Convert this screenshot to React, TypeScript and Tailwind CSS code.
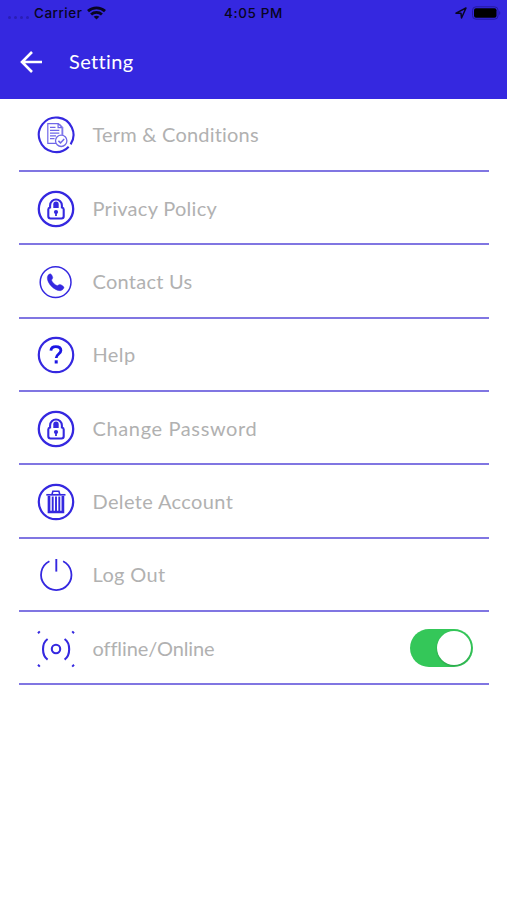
import type { ReactNode } from 'react';

const BLUE = '#3528e0';

function Icon({ children }: { children: ReactNode }) {
  return (
    <svg className="mt-[2px] h-10 w-10 shrink-0" viewBox="0 0 40 40" fill="none" stroke={BLUE} strokeWidth="2">
      {children}
    </svg>
  );
}

function TermsIcon() {
  return (
    <Icon>
      <path d="M32.7 31.7A17.3 17.3 0 1 1 34.6 29.3" strokeWidth="2.1" />
      <g strokeWidth="1.2" opacity="0.7">
        <path d="M20 28.4h-8.2V8.6h10.5l3.8 4v7.2M22.1 8.7v4h4" />
        <path d="M23.4 8.8l3.4 3.6v7.8" strokeWidth="0.9" />
        <path d="M14 12.4h5.5M14 15.3h9.3M14 18.1h9.3M14 20.9h6M14 23.7h4.5" />
        <circle cx="25.2" cy="25.8" r="5.7" fill="#fff" strokeWidth="1.3" />
        <path d="M22.4 25.9l2.1 2 3.7-3.8" strokeWidth="1.5" />
      </g>
    </Icon>
  );
}

function LockIcon() {
  return (
    <Icon>
      <circle cx="20" cy="20" r="17.2" strokeWidth="2.3" />
      <path
        d="M14.1 18.4v-2a5.9 5.9 0 0 1 11.8 0v2c1.2.3 1.8 1 1.8 2v6.9c0 1.4-.8 2.2-2.2 2.2h-11c-1.4 0-2.2-.8-2.2-2.2v-6.9c0-1 .6-1.7 1.8-2z"
        strokeWidth="2.1"
      />
      <path d="M17.3 19v-3.7a2.7 2.7 0 0 1 5.4 0V19z" fill={BLUE} stroke="none" />
      <circle cx="20" cy="23" r="2.1" fill={BLUE} stroke="none" />
      <path d="M20 22.8v4.3" strokeWidth="1.8" />
    </Icon>
  );
}

function PhoneIcon() {
  return (
    <Icon>
      <circle cx="19.6" cy="20.2" r="15.4" strokeWidth="1.5" />
      <path
        d="M11.8 13.7c.7-1.2 1.9-2 2.8-1.8 1 .3 2.1 2.7 2.2 3.9.1.9-1.2 1.4-1.2 2.3.1 1.7 3.8 5.4 5.6 5.5.9.1 1.5-1.3 2.6-1.2 1.2.1 4 1.8 4.2 2.8.2 1.3-1.9 3.3-3.6 3.5-5.5.4-13.3-7.3-13.1-12.8 0-.8.1-1.6.5-2.2z"
        fill={BLUE}
        stroke={BLUE}
        strokeWidth="0.4"
      />
    </Icon>
  );
}

function HelpIcon() {
  return (
    <Icon>
      <circle cx="20" cy="20" r="17.2" strokeWidth="2.2" />
      <path d="M14.9 15.6c.2-2.6 2-4 4.9-4 3.1 0 5.1 1.5 5.1 4 0 3.4-4.7 3.5-4.7 7.4" stroke="#1c16e4" strokeWidth="2.8" />
      <path d="M18.7 25.3h3v3.2h-3z" fill="#1c16e4" stroke="none" />
    </Icon>
  );
}

function TrashIcon() {
  return (
    <Icon>
      <circle cx="20" cy="20" r="17.2" strokeWidth="2.2" />
      <path d="M16 12.4l.9-3.2h6l.9 3.2" strokeWidth="1.6" />
      <path d="M10.3 12.8h19.2" strokeWidth="1.7" />
      <path d="M13 14v16h13.9V14" strokeWidth="2.7" />
      <path d="M16.7 14.5V30M20 14.5V30M23.3 14.5V30" strokeWidth="1.9" />
    </Icon>
  );
}

function PowerIcon() {
  return (
    <Icon>
      <path d="M13.4 6.3a15.2 15.2 0 1 0 13.7 0" strokeWidth="1.8" />
      <path d="M20.3 4v12.6" strokeWidth="1.9" />
    </Icon>
  );
}

function OnlineIcon() {
  return (
    <Icon>
      <circle cx="20" cy="20" r="4.2" strokeWidth="2.1" />
      <path d="M11.6 10c-6.1 4.2-6.1 16.4 0 20.6M28.6 10c6.1 4.2 6.1 16.4 0 20.6" strokeWidth="2.1" />
      <path d="M2 4.2l1.8-1.8M36.2 2.4L38 4.2M2 35.8l1.8 1.8M36.2 37.6l1.8-1.8" strokeWidth="2" />
    </Icon>
  );
}

const items = [
  { label: 'Term & Conditions', icon: <TermsIcon />, spacing: 'tracking-[0.2px]' },
  { label: 'Privacy Policy', icon: <LockIcon />, spacing: 'tracking-[0.28px]' },
  { label: 'Contact Us', icon: <PhoneIcon />, spacing: 'tracking-[0.25px]' },
  { label: 'Help', icon: <HelpIcon />, spacing: 'tracking-[0.4px]' },
  { label: 'Change Password', icon: <LockIcon />, spacing: 'tracking-[0.63px]' },
  { label: 'Delete Account', icon: <TrashIcon />, spacing: 'tracking-[0.36px]' },
  { label: 'Log Out', icon: <PowerIcon />, spacing: 'tracking-[0.35px]' },
  { label: 'offline/Online', icon: <OnlineIcon />, spacing: 'tracking-[-0.1px]', toggle: true },
];

function StatusBar() {
  return (
    <div className="grid h-[26px] grid-cols-3 items-center font-['Inter',sans-serif] text-[13.5px] font-medium text-[#080522]">
      <div className="flex items-center pl-2">
        <div className="mt-2 flex w-[26px] gap-[3px]">
          {[0, 1, 2, 3].map((dot) => (
            <span key={dot} className="h-[3px] w-[3px] rounded-full bg-[#2a1eb5]" />
          ))}
        </div>
        <span className="tracking-[0.5px]">Carrier</span>
        <svg className="ml-[5px] h-[14px] w-[19px]" viewBox="0 0 19 14" fill="none" stroke="#080522" strokeWidth="2.8">
          <path d="M1 5.1c4.8-4.4 12.2-4.4 17 0M4.1 8.4c3-2.8 7.8-2.8 10.8 0" />
          <path d="M9.5 13.5l-2.8-2.8c1.5-1.4 4.1-1.4 5.6 0z" fill="#080522" stroke="none" />
        </svg>
      </div>
      <span className="text-center tracking-[0.6px]">4:05 PM</span>
      <div className="flex items-center justify-end gap-[5px] pr-[6px]">
        <svg className="h-3 w-3" viewBox="0 0 12 12" fill="none" stroke="#080522" strokeWidth="1.5" strokeLinejoin="round">
          <path d="M1 6.2L11 1 6.5 11 6 6.3z" />
        </svg>
        <svg className="h-[14px] w-[29px]" viewBox="0 0 29 14">
          <rect x="0.5" y="0.8" width="25.5" height="12.4" rx="3.5" fill="none" stroke="#2419a0" />
          <rect x="2" y="2.3" width="22.5" height="9.4" rx="2" fill="#000" />
          <path d="M27.3 5v4c1.3-.5 1.3-3.5 0-4z" fill="#2419a0" />
        </svg>
      </div>
    </div>
  );
}

export default function App() {
  return (
    <div className="min-h-[900px] w-[507px] bg-white font-['Lato',sans-serif]">
      <header className="h-[98.7px] bg-[#3528e0]">
        <StatusBar />
        <div className="flex h-[72px] items-center pl-5 text-white">
          <svg className="h-[22px] w-[22px]" viewBox="0 0 22 22" fill="none" stroke="#fff" strokeWidth="2.6">
            <path d="M22 11H2.5M12 1L2 11l10 10" />
          </svg>
          <h1 className="mb-[2px] ml-[27px] text-[20px] leading-6 tracking-[0.35px]">Setting</h1>
        </div>
      </header>
      <ul className="mr-[18px] ml-[19px]">
        {items.map((item) => (
          <li key={item.label} className="flex h-[73.35px] items-center border-b-2 border-[#8076e2] pl-[17px]">
            {item.icon}
            <span className={`ml-[16.5px] text-[20px] leading-6 text-[#b1b1b1] ${item.spacing}`}>{item.label}</span>
            {item.toggle && (
              <button
                type="button"
                role="switch"
                aria-checked="true"
                aria-label="Online"
                className="mt-px mr-4 ml-auto flex h-[38px] w-[63px] items-center justify-end rounded-full bg-[#34c759] pr-[2px]"
              >
                <span className="h-[34px] w-[34px] rounded-full bg-white shadow-[0_1px_2px_rgba(0,0,0,0.2)]" />
              </button>
            )}
          </li>
        ))}
      </ul>
    </div>
  );
}
